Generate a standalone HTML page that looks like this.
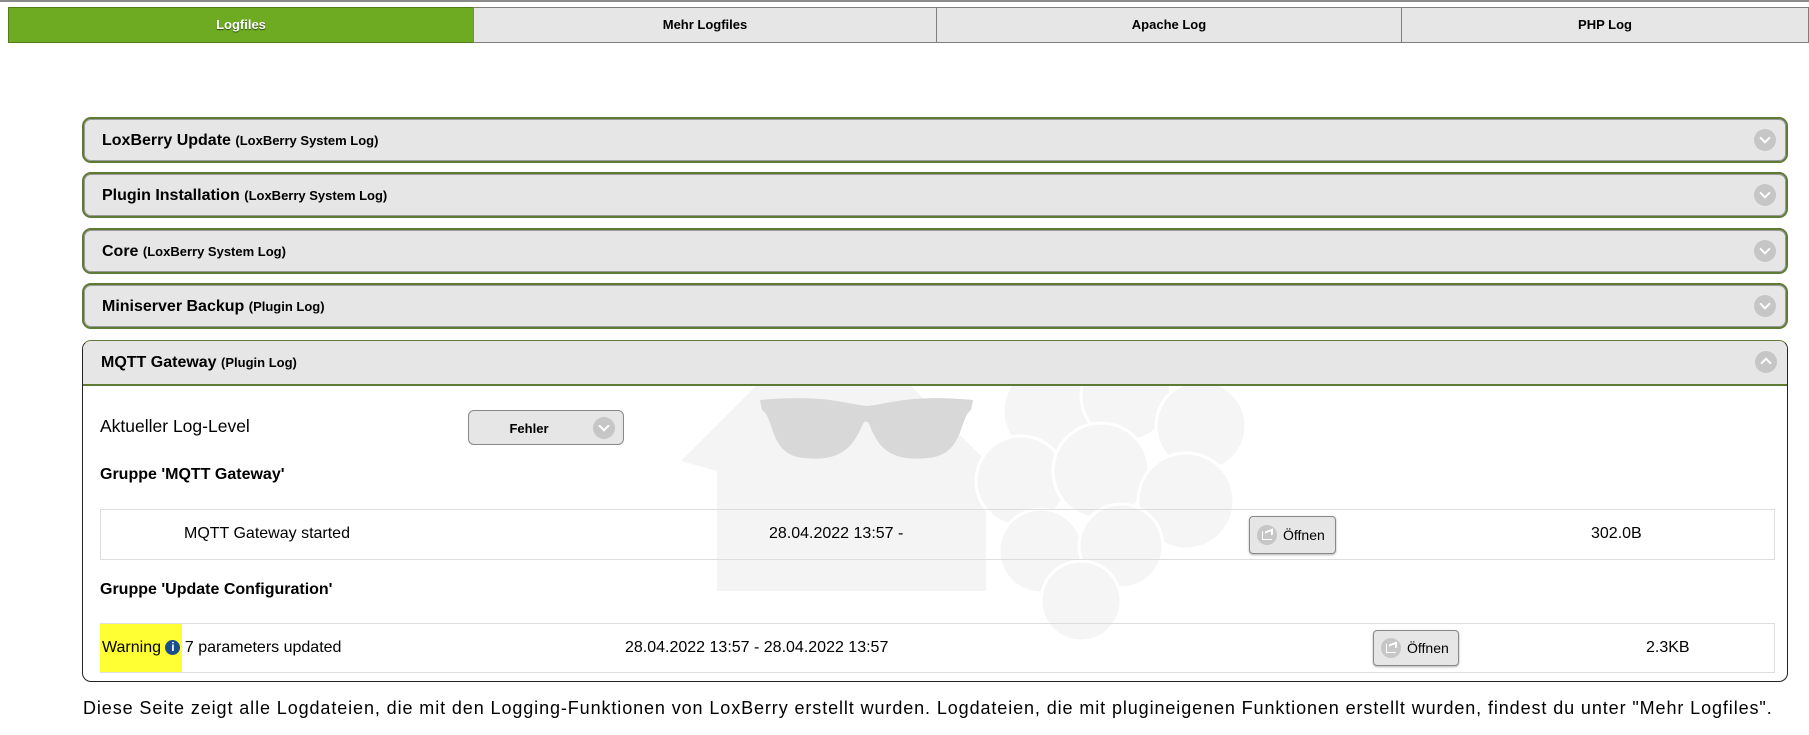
<!DOCTYPE html>
<html><head><meta charset="utf-8"><style>
*{box-sizing:border-box;margin:0;padding:0}
body{width:1809px;height:735px;background:#fff;font-family:"Liberation Sans",Arial,sans-serif;color:#000;position:relative;overflow:hidden}
.topline{position:absolute;left:0;top:0;width:1809px;height:2px;background:#8a8a8a}
.tab{position:absolute;top:7px;height:36px;background:#e6e6e6;border:1px solid #7f7f7f;font-size:13px;font-weight:bold;text-align:center;line-height:34px}
.tab.act{background:#6eab22;border-color:#4f7d1a;color:#fff;text-shadow:0 1px 1px #2d4a0c}
.coll{position:absolute;left:82px;width:1706px;height:46px;background:#e6e6e6;border:2px solid #5f7a35;border-radius:9px;box-shadow:inset 0 0 0 1px #9a9a9a}
.coll .t{position:absolute;left:18px;top:13px;font-size:16px;font-weight:bold}
.coll .t small{font-size:13px}
.chev{position:absolute;width:22px;height:22px;border-radius:50%;background:#c6c6c6}
.chev:after{content:"";position:absolute;left:7px;top:5px;width:6px;height:6px;border-right:2.5px solid #fff;border-bottom:2.5px solid #fff;transform:rotate(45deg)}
.chev.up:after{top:8px;transform:rotate(-135deg)}
.coll .chev{right:10px;top:10px}
.open{position:absolute;left:82px;top:340px;width:1706px;height:342px;border:1.5px solid #222;border-top-color:#5f7a35;border-radius:9px;overflow:hidden}
.open .hd{position:absolute;left:0;top:0;width:100%;height:45px;background:#e6e6e6;border-bottom:2px solid #5f7a35}
.abs{position:absolute;white-space:nowrap}
.row{position:absolute;left:100px;width:1675px;border:1.5px solid #ddd}
.btn{position:absolute;background:#e6e6e6;border:1px solid #888;border-radius:4px;box-shadow:0 1px 2px rgba(0,0,0,.3);font-size:14px}
.btn .ic{position:absolute;left:7px;top:8px;width:20px;height:20px;border-radius:50%;background:#c6c6c6}
.btn .ic:before{content:"";position:absolute;left:5px;top:6px;width:9px;height:8px;border:1.5px solid #fff;border-top:none;border-right:none}
.btn .ic:after{content:"";position:absolute;left:8px;top:5px;width:6px;height:4px;border-top:2px solid #fff;border-right:2px solid #fff;transform:skewY(-20deg)}
.btn span{position:absolute;left:33px;top:10px}
</style></head><body>
<div class="topline"></div>
<div class="tab act" style="left:8px;width:466px">Logfiles</div>
<div class="tab" style="left:473px;width:464px">Mehr Logfiles</div>
<div class="tab" style="left:936px;width:466px">Apache Log</div>
<div class="tab" style="left:1401px;width:408px">PHP Log</div>

<div class="coll" style="top:117px"><div class="t">LoxBerry Update <small>(LoxBerry System Log)</small></div><div class="chev"></div></div>
<div class="coll" style="top:172px"><div class="t">Plugin Installation <small>(LoxBerry System Log)</small></div><div class="chev"></div></div>
<div class="coll" style="top:228px"><div class="t">Core <small>(LoxBerry System Log)</small></div><div class="chev"></div></div>
<div class="coll" style="top:283px"><div class="t">Miniserver Backup <small>(Plugin Log)</small></div><div class="chev"></div></div>

<div class="open">
 <svg style="position:absolute;left:0;top:0" width="1706" height="342">
  <g transform="translate(-82,-340)">
   <path d="M680 460 L760 380 L905 380 L985 460 L985 590 L716 590 L716 470 Z" fill="#f4f4f4"/>
   <g fill="#f5f5f5" stroke="#fff" stroke-width="3">
    <circle cx="1050" cy="410" r="48"/><circle cx="1125" cy="395" r="45"/><circle cx="1200" cy="425" r="45"/>
    <circle cx="1020" cy="480" r="45"/><circle cx="1100" cy="470" r="48"/><circle cx="1185" cy="500" r="48"/>
    <circle cx="1040" cy="550" r="42"/><circle cx="1120" cy="545" r="42"/><circle cx="1080" cy="600" r="40"/>
   </g>
  </g>
 </svg>
 <div class="hd"><div class="abs" style="left:18px;top:13px;font-size:16px;font-weight:bold">MQTT Gateway <small style="font-size:13px">(Plugin Log)</small></div><div class="chev up" style="right:10px;top:10px"></div></div>
</div>
<svg style="position:absolute;left:760px;top:396px" width="215" height="64"><path d="M0 4 C65 -2 86 8 107 10 C128 8 150 -2 213 4 L211 14 C199 22 204 60 167 62 C129 66 118 50 110 30 C108 24 104 24 102 30 C93 50 82 66 45 62 C9 60 15 22 2 14 Z" fill="#d8d8d8"/></svg>

<div class="abs" style="left:100px;top:416px;font-size:17.5px">Aktueller Log-Level</div>
<div class="btn" style="left:468px;top:410px;width:156px;height:35px;border-radius:6px;box-shadow:none"><span style="left:0;width:120px;text-align:center;top:10px;font-weight:bold;font-size:13px">Fehler</span><div class="chev" style="right:8px;top:6px"></div></div>
<div class="abs" style="left:100px;top:466px;font-size:16px;font-weight:bold">Gruppe 'MQTT Gateway'</div>
<div class="row" style="top:509px;height:51px"></div>
<div class="abs" style="left:184px;top:525px;font-size:16px">MQTT Gateway started</div>
<div class="abs" style="left:769px;top:525px;font-size:16px">28.04.2022 13:57 -</div>
<div class="btn" style="left:1249px;top:516px;width:87px;height:38px"><div class="ic"></div><span>Öffnen</span></div>
<div class="abs" style="left:1591px;top:525px;font-size:16px">302.0B</div>

<div class="abs" style="left:100px;top:581px;font-size:16px;font-weight:bold">Gruppe 'Update Configuration'</div>
<div class="row" style="top:623px;height:50px"></div>
<div class="abs" style="left:100px;top:624px;width:82px;height:48px;background:#ffff33"></div>
<div class="abs" style="left:102px;top:639px;font-size:16px">Warning <span style="display:inline-block;width:15px;height:15px;border-radius:50%;background:#1b4f8c;color:#fff;font-size:12px;font-weight:bold;text-align:center;line-height:15px;vertical-align:1px">i</span> 7 parameters updated</div>
<div class="abs" style="left:625px;top:639px;font-size:16px">28.04.2022 13:57 - 28.04.2022 13:57</div>
<div class="btn" style="left:1373px;top:630px;width:86px;height:36px"><div class="ic" style="top:7px"></div><span style="top:9px">Öffnen</span></div>
<div class="abs" style="left:1646px;top:639px;font-size:16px">2.3KB</div>

<div class="abs" style="left:83px;top:698px;font-size:18px;letter-spacing:0.9px">Diese Seite zeigt alle Logdateien, die mit den Logging-Funktionen von LoxBerry erstellt wurden. Logdateien, die mit plugineigenen Funktionen erstellt wurden, findest du unter "Mehr Logfiles".</div>
</body></html>
